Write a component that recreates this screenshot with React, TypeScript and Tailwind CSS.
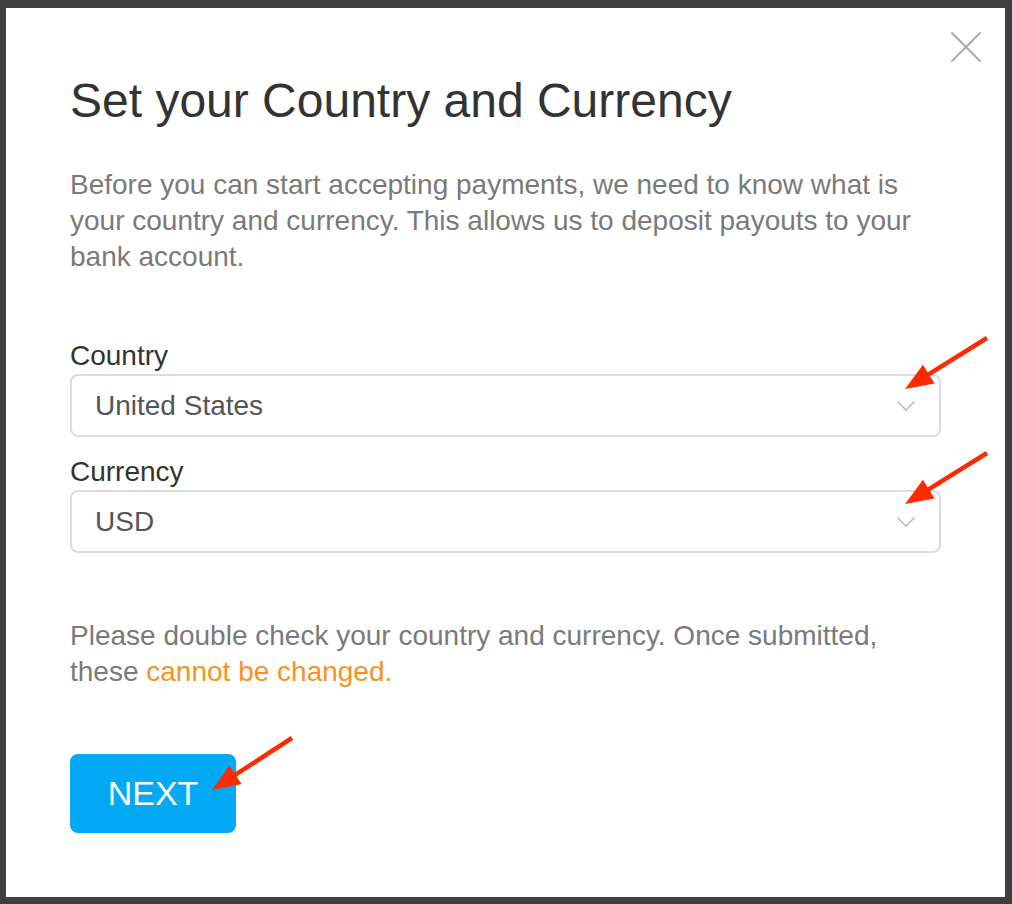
import { X } from 'lucide-react';

type ArrowProps = { tail: [number, number]; tip: [number, number] };

// red annotation arrow drawn over the screenshot
function Arrow({ tail, tip }: ArrowProps) {
  const dx = tip[0] - tail[0];
  const dy = tip[1] - tail[1];
  const len = Math.hypot(dx, dy);
  const ux = dx / len;
  const uy = dy / len;
  const headLen = 28;
  const half = 11;
  const bx = tip[0] - ux * headLen;
  const by = tip[1] - uy * headLen;
  const px = -uy * half;
  const py = ux * half;
  return (
    <g>
      <line
        x1={tail[0]}
        y1={tail[1]}
        x2={bx + ux * 4}
        y2={by + uy * 4}
        stroke="#ff2a00"
        strokeWidth={4.5}
        strokeLinecap="butt"
      />
      <polygon
        points={`${tip[0]},${tip[1]} ${bx + px},${by + py} ${bx - px},${by - py}`}
        fill="#ff2a00"
      />
    </g>
  );
}

function Chevron() {
  return (
    <svg width="20" height="12" viewBox="0 0 20 12" className="shrink-0">
      <path d="M1.5 1.5 L10 10 L18.5 1.5" fill="none" stroke="#bdbdbd" strokeWidth="1.6" />
    </svg>
  );
}

function SelectBox({ value }: { value: string }) {
  return (
    <div className="flex h-[63px] w-full items-center justify-between rounded-lg border-2 border-[#dcdcdc] bg-white pl-[23px] pr-[23px]">
      <span className="text-[28px] leading-none text-[#555555]">{value}</span>
      <Chevron />
    </div>
  );
}

export default function App() {
  return (
    <div
      className="relative h-[904px] w-[1012px] overflow-hidden bg-[#3f3f3f] pl-[6px] pt-[8px]"
      style={{ fontFamily: '"Liberation Sans", Arial, sans-serif' }}
    >
      <div className="relative flex h-[889px] w-[999px] flex-col bg-white px-16 pt-16">
        <button className="absolute right-[11px] top-[11px] text-[#ababab]">
          <X size={56} strokeWidth={0.8} />
        </button>

        <h1 className="text-[48px] font-normal leading-[58px] text-[#333333]">
          Set your Country and Currency
        </h1>

        <p className="mt-[37px] w-[860px] text-[28px] leading-[36px] text-[#7a7a7a]">
          Before you can start accepting payments, we need to know what is your country and
          currency. This allows us to deposit payouts to your bank account.
        </p>

        <label className="mt-[63px] text-[28px] leading-[36px] text-[#333333]">Country</label>
        <SelectBox value="United States" />

        <label className="mt-[17px] text-[28px] leading-[36px] text-[#333333]">Currency</label>
        <SelectBox value="USD" />

        <p className="mt-[65px] w-[860px] text-[28px] leading-[36px] text-[#7a7a7a]">
          Please double check your country and currency. Once submitted, these{' '}
          <span className="text-[#f8921e]">cannot be changed.</span>
        </p>

        <div className="mt-16">
          <button className="flex h-[79px] w-[166px] items-center justify-center rounded-lg bg-[#03a9f4] text-[34px] text-white">
            NEXT
          </button>
        </div>
      </div>

      <svg className="pointer-events-none absolute left-0 top-0" width="1012" height="904">
        <Arrow tail={[987, 338]} tip={[905, 389]} />
        <Arrow tail={[987, 453]} tip={[905, 504]} />
        <Arrow tail={[292, 738]} tip={[212, 790]} />
      </svg>
    </div>
  );
}
